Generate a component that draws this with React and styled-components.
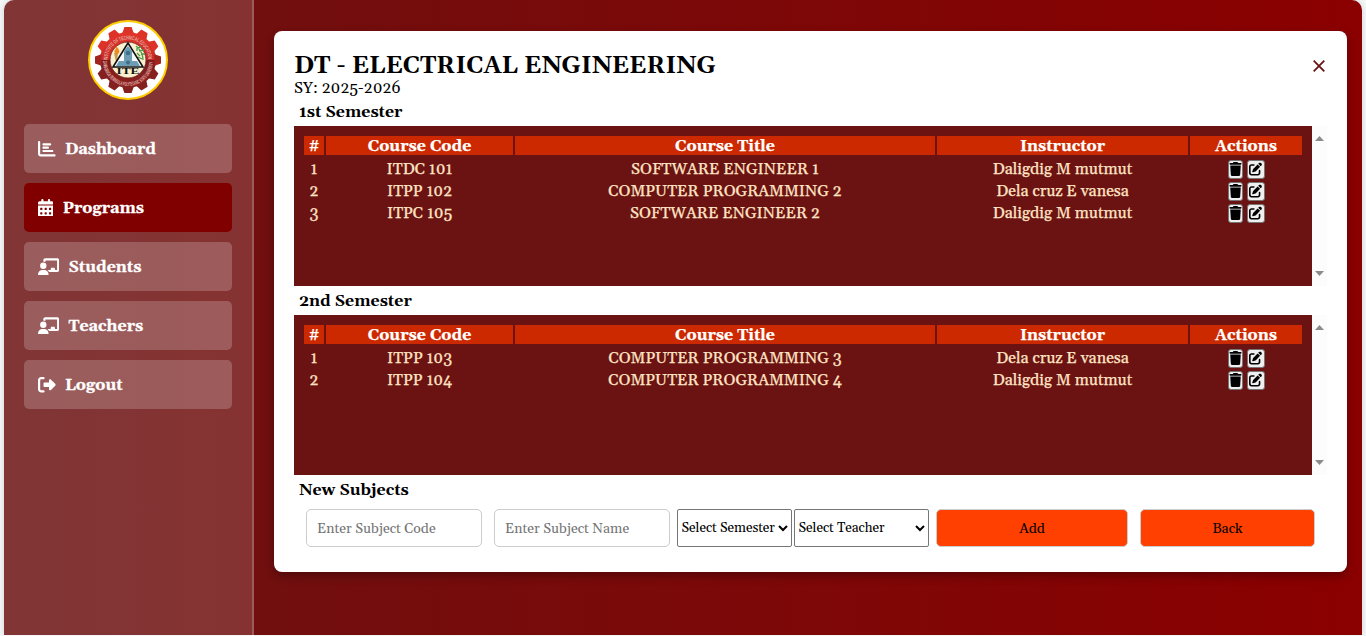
import React from "react";
import styled, { createGlobalStyle } from "styled-components";
import {
  FaChartBar,
  FaCalendarDays,
  FaChalkboardUser,
  FaRightFromBracket,
  FaTrash,
  FaPenToSquare,
} from "react-icons/fa6";

const serif = `Georgia, Gelasio, "Liberation Serif", serif`;

const GlobalStyle = createGlobalStyle`
  *, *::before, *::after { box-sizing: border-box; }
  body { margin: 0; background: #f4f6f7; font-family: ${serif}; font-size: 16px; color: #000; overflow: hidden; }
  button, input, select { font-family: inherit; }
`;

const Shell = styled.div`
  display: flex;
  height: 635px;
  margin: 0 4px;
  border-radius: 10px 10px 0 0;
  overflow: hidden;
  background: linear-gradient(90deg, #6b1212, #8b0000);
  box-shadow: 0 0 6px rgba(0, 0, 0, 0.15);
`;

const Sidebar = styled.aside`
  flex: none;
  width: 250px;
  padding: 20px;
  border-right: 2px solid rgba(255, 255, 255, 0.2);
  background: rgba(255, 255, 255, 0.15);
`;

const Logo = styled.svg`
  display: block;
  width: 80px;
  height: 80px;
  margin: 0 auto 24px;
`;

const Nav = styled.nav`
  display: flex;
  flex-direction: column;
  gap: 10px;
`;

const NavItem = styled.a`
  display: flex;
  align-items: center;
  height: 49px;
  padding: 0 14px;
  border-radius: 5px;
  background: ${(p) => (p.$active ? "#800000" : "rgba(255, 255, 255, 0.2)")};
  color: #fff;
  font-size: 16px;
  font-weight: bold;
  -webkit-text-stroke: 0.3px #fff;

  svg {
    width: ${(p) => p.$icon}px;
    height: 17.6px;
    margin-right: 9.3px;
    -webkit-text-stroke: 0;
  }
`;

const Content = styled.main`
  flex: 1;
  padding: 31px 15px 0 20px;
`;

const Card = styled.section`
  height: 541px;
  padding: 20px;
  border-radius: 8px;
  background: #fff;
  box-shadow: 0 4px 10px rgba(0, 0, 0, 0.3);
`;

const CardHeader = styled.header`
  display: flex;
  justify-content: space-between;
  height: 47px;
`;

const Title = styled.h1`
  margin: 0;
  padding-top: 2px;
  font-size: 24px;
  line-height: 27px;
`;

const SchoolYear = styled.p`
  margin: 0;
  line-height: 17px;
`;

const Close = styled.svg`
  width: 12px;
  height: 12px;
  margin: 9px 2.5px 0 0;
`;

const SectionTitle = styled.h2`
  height: ${(p) => p.$height || 29}px;
  margin: 0;
  padding-left: 5px;
  font-size: 16px;
  line-height: ${(p) => (p.$height ? 28 : 30)}px;
`;

const Panel = styled.div`
  display: flex;
  width: 1033px;
  height: 160px;
`;

const Table = styled.div`
  flex: 1;
  padding: 10px;
  background: #6b1212;
`;

const Row = styled.div`
  display: grid;
  grid-template-columns: 20px 187px 420px 251px 112px;
  column-gap: 2px;
  height: 22px;
  line-height: 22px;
  color: #ffe4c4;
  text-align: center;
  -webkit-text-stroke: 0.25px currentColor;
`;

const HeadRow = styled(Row)`
  height: 19px;
  margin-bottom: 3px;
  line-height: 21px;
  color: #fff;
  font-weight: bold;

  > span {
    height: 19px;
    background: #cc2900;
  }
`;

const Actions = styled.span`
  display: flex;
  justify-content: center;
  align-items: center;
  gap: 4px;
`;

const IconButton = styled.button`
  display: flex;
  flex: none;
  align-items: center;
  justify-content: center;
  width: ${(p) => p.$width}px;
  height: 19px;
  padding: 0;
  border: 1px solid #767676;
  border-radius: 3px;
  background: #efefef;
  color: #000;

  svg {
    flex: none;
    width: ${(p) => p.$icon}px;
    height: ${(p) => p.$icon + 1}px;
  }
`;

const ScrollTrack = styled.div`
  display: flex;
  flex-direction: column;
  justify-content: space-between;
  align-items: center;
  width: 15px;
  padding: 10px 0;
  background: #fcfcfc;

  svg {
    display: block;
    width: 9px;
    height: 5px;
    fill: #8b8b8b;
  }
`;

const Form = styled.form`
  display: flex;
  padding: 5px 0 0 12px;
`;

const Input = styled.input`
  width: 176px;
  height: 38px;
  margin-right: ${(p) => p.$gap}px;
  padding: 2px 10px 0;
  border: 1px solid #ccc;
  border-radius: 5px;
  font-size: 14px;

  &::placeholder {
    color: #757575;
  }
`;

const Select = styled.select`
  width: ${(p) => p.$width}px;
  height: 38px;
  margin-right: ${(p) => p.$gap}px;
  padding: 0;
  border: 1px solid #767676;
  border-radius: 2px;
  background: #fff;
  color: #000;
  font-size: 13.6px;
  letter-spacing: -0.06px;
  text-indent: -0.5px;
`;

const Button = styled.button`
  width: ${(p) => p.$width}px;
  height: 38px;
  margin-right: 12px;
  padding: 2px 0 0;
  border: 1px solid #ccc;
  border-radius: 5px;
  background: #ff4000;
  color: #000;
  font-size: 14px;
`;

const teeth = Array.from({ length: 12 }, (_, i) => i * 30);

function Emblem() {
  return (
    <Logo viewBox="-40 -40 80 80">
      <defs>
        <linearGradient id="gear" x1="0" y1="-33" x2="0" y2="33" gradientUnits="userSpaceOnUse">
          <stop offset="0" stopColor="#e8392c" />
          <stop offset="0.5" stopColor="#c92b25" />
          <stop offset="0.5" stopColor="#7c1b1e" />
          <stop offset="1" stopColor="#8e2521" />
        </linearGradient>
        <path id="arcTop" d="M-20.5 0A20.5 20.5 0 0 1 20.5 0" />
        <path id="arcBottom" d="M-25 1A25 25 0 0 0 25 1" />
      </defs>
      <circle r="39" fill="#fff" stroke="#fc0" strokeWidth="2" />
      <circle r="28" fill="url(#gear)" />
      {teeth.map((a) => (
        <path
          key={a}
          d="M-5.8-26.5L-3.6-33H3.6L5.8-26.5Z"
          transform={`rotate(${a})`}
          fill={a > 90 && a < 270 ? "#842020" : a === 90 || a === 270 ? "#a3241f" : "#dc3228"}
        />
      ))}
      <g fill="#e2aca5" fontSize="5.6" fontWeight="bold" fontFamily="Liberation Sans, sans-serif">
        <text>
          <textPath href="#arcTop" textLength="63" lengthAdjust="spacingAndGlyphs">INSTITUTE OF TECHNICAL EDUCATION</textPath>
        </text>
        <text>
          <textPath href="#arcBottom" textLength="77" lengthAdjust="spacingAndGlyphs">ZAMBOANGA PENINSULA POLYTECHNIC STATE UNIVERSITY</textPath>
        </text>
      </g>
      <circle r="18" fill="#f9f0cf" stroke="#6d1b1b" strokeWidth="0.8" />
      <path d="M-14-7L-10-7L-11.5 4Z" fill="#c79a4a" />
      <path d="M-12-6C-16-10-11-10-12-14C-8-10-8-8-10-6Z" fill="#f58a1d" />
      <path d="M8-14Q15-8 15 0M9-12l4-1M11-9l5-1M13-6l4 0M9-9l0-3M12-4l-3-3M14-1l-4-2" stroke="#4b9b4a" strokeWidth="1.3" fill="none" />
      <path d="M0-17L-15 7H15Z" fill="#f5f9fa" stroke="#111" strokeWidth="1.6" />
      <path d="M-4-9L0-14L4-9V1H9L12 6H-12L-9 1H-4Z" fill="#6d9cb5" />
      <circle cy="-7" r="2.3" fill="#3f7088" />
      <circle cy="2.5" r="2" fill="#3f7088" />
      <text y="13.6" textAnchor="middle" fontFamily="Liberation Serif, serif" fontWeight="bold" fontSize="7.5" textLength="23" lengthAdjust="spacingAndGlyphs" fill="#111">
        ITE
      </text>
    </Logo>
  );
}

function Semester({ rows }) {
  return (
    <Panel>
      <Table>
        <HeadRow>
          <span>#</span>
          <span>Course Code</span>
          <span>Course Title</span>
          <span>Instructor</span>
          <span>Actions</span>
        </HeadRow>
        {rows.map(([code, title, teacher], i) => (
          <Row key={code}>
            <span>{i + 1}</span>
            <span>{code}</span>
            <span>{title}</span>
            <span>{teacher}</span>
            <Actions>
              <IconButton $width={15} $icon={13} aria-label="Delete"><FaTrash /></IconButton>
              <IconButton $width={18} $icon={13} aria-label="Edit"><FaPenToSquare /></IconButton>
            </Actions>
          </Row>
        ))}
      </Table>
      <ScrollTrack>
        <svg viewBox="0 0 9 5"><path d="M0 5L4.5 0L9 5Z" /></svg>
        <svg viewBox="0 0 9 5"><path d="M0 0L4.5 5L9 0Z" /></svg>
      </ScrollTrack>
    </Panel>
  );
}

const first = [
  ["ITDC 101", "SOFTWARE ENGINEER 1", "Daligdig M mutmut"],
  ["ITPP 102", "COMPUTER PROGRAMMING 2", "Dela cruz E vanesa"],
  ["ITPC 105", "SOFTWARE ENGINEER 2", "Daligdig M mutmut"],
];

const second = [
  ["ITPP 103", "COMPUTER PROGRAMMING 3", "Dela cruz E vanesa"],
  ["ITPP 104", "COMPUTER PROGRAMMING 4", "Daligdig M mutmut"],
];

export default function App() {
  return (
    <>
      <GlobalStyle />
      <Shell>
        <Sidebar>
          <Emblem />
          <Nav>
            <NavItem $icon={17.6}><FaChartBar />Dashboard</NavItem>
            <NavItem $icon={15.4} $active><FaCalendarDays />Programs</NavItem>
            <NavItem $icon={21.2}><FaChalkboardUser />Students</NavItem>
            <NavItem $icon={21.2}><FaChalkboardUser />Teachers</NavItem>
            <NavItem $icon={17.6}><FaRightFromBracket />Logout</NavItem>
          </Nav>
        </Sidebar>
        <Content>
          <Card>
            <CardHeader>
              <div>
                <Title>DT - ELECTRICAL ENGINEERING</Title>
                <SchoolYear>SY: 2025-2026</SchoolYear>
              </div>
              <Close viewBox="0 0 12 12" stroke="#6b1212" strokeWidth="1.8">
                <path d="M0.7 0.7L11.3 11.3M11.3 0.7L0.7 11.3" />
              </Close>
            </CardHeader>
            <SectionTitle $height={28}>1st Semester</SectionTitle>
            <Semester rows={first} />
            <SectionTitle>2nd Semester</SectionTitle>
            <Semester rows={second} />
            <SectionTitle>New Subjects</SectionTitle>
            <Form>
              <Input $gap={12} placeholder="Enter Subject Code" />
              <Input $gap={7} placeholder="Enter Subject Name" />
              <Select $width={115} $gap={2}><option>Select Semester</option></Select>
              <Select $width={135} $gap={7}><option>Select Teacher</option></Select>
              <Button type="button" $width={192}>Add</Button>
              <Button type="button" $width={175}>Back</Button>
            </Form>
          </Card>
        </Content>
      </Shell>
    </>
  );
}
